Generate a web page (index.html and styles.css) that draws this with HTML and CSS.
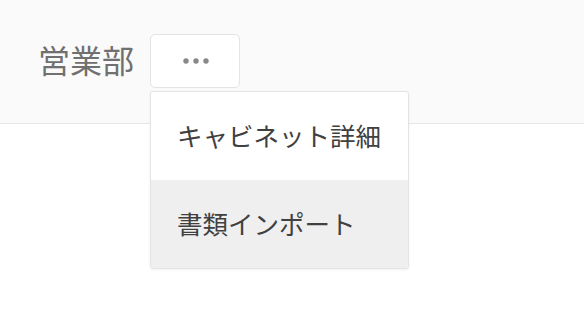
FILE: index.html
```html
<!DOCTYPE html>
<html lang="ja">
<head>
<meta charset="utf-8">
<link rel="stylesheet" href="styles.css">
</head>
<body>
<div class="page">
  <div class="header">
    <div class="toolbar">
      <span class="label">営業部</span>
      <div class="more-wrap">
        <button class="more-btn" type="button" aria-label="more">
          <svg width="28" height="8" viewBox="0 0 28 8"><circle cx="4" cy="4" r="2.7" fill="#888"/><circle cx="14" cy="4" r="2.7" fill="#888"/><circle cx="24" cy="4" r="2.7" fill="#888"/></svg>
        </button>
        <ul class="menu">
          <li class="menu-item">キャビネット詳細</li>
          <li class="menu-item active">書類インポート</li>
        </ul>
      </div>
    </div>
  </div>
</div>
</body>
</html>
```
FILE: styles.css
```css
html, body {
  margin: 0;
  padding: 0;
  background: #ffffff;
  font-family: "Noto Sans CJK JP", "Noto Sans", sans-serif;
}
.page {
  min-height: 326px;
}
.header {
  height: 123px;
  background: #fafafa;
  border-bottom: 1px solid #e6e6e6;
}
.toolbar {
  display: flex;
  align-items: center;
  padding: 34px 0 0 38px;
}
.label {
  font-size: 32px;
  line-height: 50px;
  padding-bottom: 4px;
  color: #707070;
  margin-right: 16px;
}
.more-wrap {
  position: relative;
}
.more-btn {
  display: flex;
  align-items: center;
  justify-content: center;
  width: 90px;
  height: 54px;
  padding: 0 0 0 2px;
  background: #ffffff;
  border: 1px solid #e4e4e4;
  border-radius: 5px;
  box-sizing: border-box;
}
.menu {
  position: absolute;
  z-index: 10;
  top: 57px;
  left: 0;
  width: 259px;
  margin: 0;
  padding: 0;
  list-style: none;
  background: #ffffff;
  border: 1px solid #e4e4e4;
  border-radius: 3px;
  box-shadow: 0 1px 3px rgba(0,0,0,0.06);
  box-sizing: border-box;
}
.menu-item {
  height: 88px;
  box-sizing: border-box;
  display: flex;
  align-items: center;
  padding: 0 0 4px 26px;
  font-size: 25.5px;
  color: #404040;
}
.menu-item.active {
  background: #efefef;
}
```
